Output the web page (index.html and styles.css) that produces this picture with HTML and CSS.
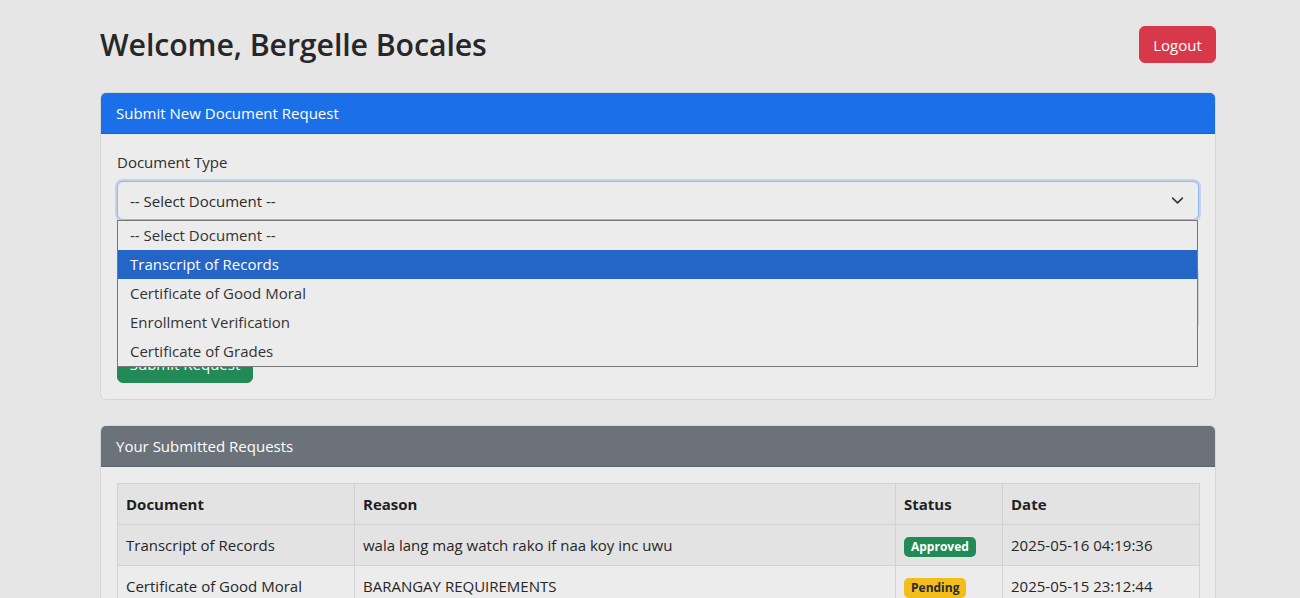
FILE: index.html
```html
<!DOCTYPE html>
<html lang="en">
<head>
<meta charset="utf-8">
<title>Student Dashboard</title>
<link rel="stylesheet" href="styles.css">
</head>
<body>
<div class="container">
  <div class="topbar">
    <h2 class="welcome">Welcome, Bergelle Bocales</h2>
    <a class="btn btn-danger" href="#">Logout</a>
  </div>

  <div class="card">
    <div class="card-header primary">Submit New Document Request</div>
    <div class="card-body">
      <div class="field">
        <label class="form-label">Document Type</label>
        <div class="select-wrap">
          <div class="form-select">
            <span>-- Select Document --</span>
            <svg class="chev" width="16" height="16" viewBox="0 0 16 16"><path d="M2 5l6 6 6-6" fill="none" stroke="#343a40" stroke-width="2" stroke-linecap="round" stroke-linejoin="round"/></svg>
          </div>
          <ul class="dropdown">
            <li>-- Select Document --</li>
            <li class="active">Transcript of Records</li>
            <li>Certificate of Good Moral</li>
            <li>Enrollment Verification</li>
            <li>Certificate of Grades</li>
          </ul>
        </div>
      </div>
      <div class="field">
        <label class="form-label">Reason</label>
        <div class="form-textarea"></div>
      </div>
      <button class="btn btn-success">Submit Request</button>
    </div>
  </div>

  <div class="card">
    <div class="card-header secondary">Your Submitted Requests</div>
    <div class="card-body">
      <table class="table">
        <colgroup>
          <col class="c1"><col class="c2"><col class="c3"><col class="c4">
        </colgroup>
        <thead>
          <tr><th>Document</th><th>Reason</th><th>Status</th><th>Date</th></tr>
        </thead>
        <tbody>
          <tr class="odd"><td>Transcript of Records</td><td>wala lang mag watch rako if naa koy inc uwu</td><td><span class="badge approved">Approved</span></td><td>2025-05-16 04:19:36</td></tr>
          <tr><td>Certificate of Good Moral</td><td>BARANGAY REQUIREMENTS</td><td><span class="badge pending">Pending</span></td><td>2025-05-15 23:12:44</td></tr>
        </tbody>
      </table>
    </div>
  </div>
</div>
</body>
</html>
```

FILE: styles.css
```css
* { box-sizing: border-box; }
html, body { margin: 0; padding: 0; }
body {
  background: #e6e6e6;
  color: #262626;
  font-family: "Open Sans", "Noto Sans", "Liberation Sans", sans-serif;
  font-size: 15px;
  line-height: 24px;
  overflow: hidden;
  height: 598px;
}
.container {
  width: 1116px;
  margin-left: 100px;
}
.topbar {
  display: flex;
  justify-content: space-between;
  align-items: center;
  height: 63px;
  padding-top: 26px;
  margin-bottom: 29px;
}
.welcome {
  margin: 0;
  font-size: 30.3px;
  font-weight: 600;
  line-height: 37px;
  color: #262729;
  letter-spacing: -0.1px;
}
.btn {
  display: inline-flex;
  align-items: center;
  justify-content: center;
  height: 38px;
  padding: 0 12px;
  border: 1px solid transparent;
  border-radius: 6px;
  font-family: inherit;
  font-size: 15px;
  color: #fff;
  text-decoration: none;
  white-space: nowrap;
}
.btn-danger { background: #d8394a; border-color: #d8394a; width: 77px; height: 37px; }
.btn-success { background: #228a57; border-color: #228a57; width: 136px; }

.card {
  border: 1px solid #d6d6d6;
  border-radius: 6px;
  background: #ececec;
  margin-bottom: 25px;
  overflow: visible;
}
.card-header {
  height: 41px;
  padding: 8px 15px;
  color: #fff;
  border-bottom: 1px solid rgba(0,0,0,0.12);
  border-radius: 5px 5px 0 0;
}
.card-header.primary { background: #1b6fe9; }
.card-header.secondary { background: #6c727a; }
.card-body { padding: 16px; }

.field { margin-bottom: 16px; }
.form-label { display: block; margin-bottom: 7px; color: #2e2e2e; }
.select-wrap { position: relative; }
.form-select {
  display: flex;
  align-items: center;
  justify-content: space-between;
  height: 39px;
  padding: 0 14px 0 12px;
  border: 1px solid #93b8ee;
  border-radius: 6px;
  background: #ececec;
  box-shadow: 0 0 0 2px rgba(120,160,230,0.35);
  color: #2a2a2a;
}
.chev { width: 13px; height: 13px; }
.dropdown {
  position: absolute;
  top: 39px;
  left: 0;
  width: 1081px;
  margin: 0;
  padding: 0;
  list-style: none;
  background: #ececec;
  border: 1px solid #777;
  z-index: 5;
}
.dropdown li {
  height: 29px;
  line-height: 29px;
  padding-left: 12px;
  color: #333;
}
.dropdown li.active { background: #2466c8; color: #fff; }
.form-textarea {
  height: 62px;
  border: 1px solid #cfcfcf;
  border-radius: 6px;
  background: #ececec;
}

.table {
  width: 1082px;
  border-collapse: collapse;
  table-layout: fixed;
  color: #262626;
}
.c1 { width: 237px; }
.c2 { width: 541px; }
.c3 { width: 107px; }
.c4 { width: 197px; }
.table th, .table td {
  border: 1px solid #d2d2d2;
  padding: 8px 8px;
  text-align: left;
  vertical-align: middle;
  line-height: 24px;
  height: 41px;
}
.table th { font-weight: 700; background: #e3e3e3; color: #1f1f1f; }
.table tr.odd td { background: #e3e3e3; }
.table td { background: #ececec; }
.badge {
  display: inline-block;
  padding: 0 7px;
  border-radius: 5px;
  font-size: 12px;
  font-weight: 700;
  line-height: 20px;
  vertical-align: middle;
}
.badge.approved { background: #228a57; color: #fff; }
.badge.pending { background: #f3bd1b; color: #2a2a2a; }
```
